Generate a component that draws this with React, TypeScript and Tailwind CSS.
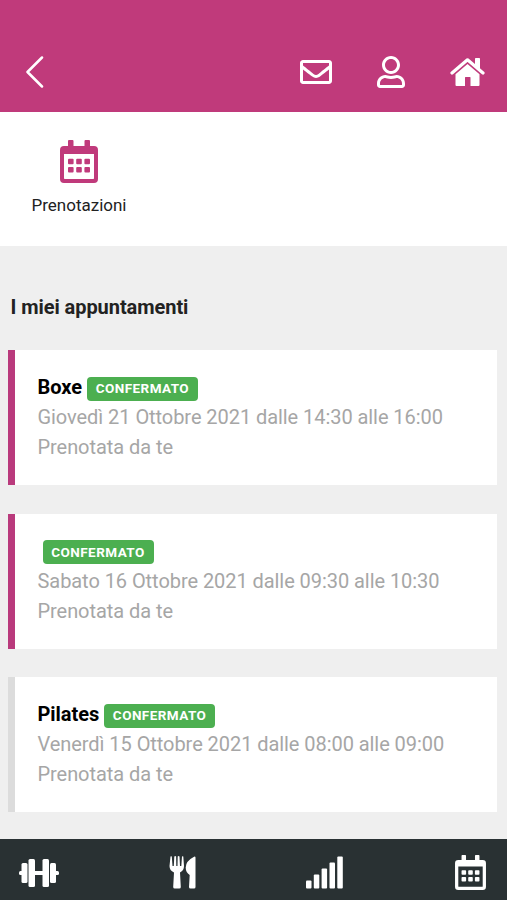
import { FaRegEnvelope, FaRegUser } from 'react-icons/fa';

const appointments = [
  {
    title: 'Boxe',
    when: 'Giovedì 21 Ottobre 2021 dalle 14:30 alle 16:00',
    border: 'border-[#b93a7c]',
  },
  {
    title: '',
    when: 'Sabato 16 Ottobre 2021 dalle 09:30 alle 10:30',
    border: 'border-[#b93a7c]',
  },
  {
    title: 'Pilates',
    when: 'Venerdì 15 Ottobre 2021 dalle 08:00 alle 09:00',
    border: 'border-[#dcdcdc]',
  },
];

function CalendarIcon({ className }: { className: string }) {
  return (
    <svg viewBox="0 0 38 43" fill="currentColor" className={className}>
      <path
        fillRule="evenodd"
        d="M8 1q0-1 1-1h3.500q1 0 1 1v5h11V1q0-1 1-1H29q1 0 1 1v5h4q4 0 4 4v29q0 4-4 4H4q-4 0-4-4V10q0-4 4-4h4zM4 14v24.300q0 .7.700.7h28.600q.7 0 .7-.7V14z"
      />
      <rect x="8" y="18.700" width="5.600" height="5.600" rx="1" />
      <rect x="16.200" y="18.700" width="5.600" height="5.600" rx="1" />
      <rect x="24.400" y="18.700" width="5.600" height="5.600" rx="1" />
      <rect x="8" y="27" width="5.600" height="5.600" rx="1" />
      <rect x="16.200" y="27" width="5.600" height="5.600" rx="1" />
      <rect x="24.400" y="27" width="5.600" height="5.600" rx="1" />
    </svg>
  );
}

function HomeIcon() {
  return (
    <svg viewBox="0 0 36 32" fill="currentColor" className="h-8 w-9">
      <path
        d="M2 17 17.500 3.800 33 17"
        fill="none"
        stroke="currentColor"
        strokeWidth="3.200"
        strokeLinecap="round"
        strokeLinejoin="round"
      />
      <path d="M25 2.800q0-.8.800-.8h3.400q.8 0 .8.800V14l-5-4.300z" />
      <path d="M17.500 8 29.500 18.200V29q0 1-1 1H20.500V21.500q0-.5-.5-.5h-4.500q-.5 0-.5.500V30H6.500q-1 0-1-1V18.200z" />
    </svg>
  );
}

function Header() {
  return (
    <header className="flex h-28 items-end justify-between bg-[#c03a7b] pr-[21px] pb-6 pl-[25px] text-white">
      <svg
        viewBox="0 0 20 32"
        className="h-8 w-5"
        fill="none"
        stroke="currentColor"
        strokeWidth="2.500"
        strokeLinecap="round"
        strokeLinejoin="round"
      >
        <path d="M17 1.500 2.500 16 17 30.500" />
      </svg>
      <div className="flex items-center">
        <FaRegEnvelope className="mr-[43px] size-8" />
        <FaRegUser className="mr-[43px] size-8" />
        <HomeIcon />
      </div>
    </header>
  );
}

function Appointment({ title, when, border }: (typeof appointments)[number]) {
  return (
    <div
      className={`h-[135px] border-l-[7px] bg-white pt-[22px] pl-[22.500px] ${border}`}
    >
      <div className="flex h-[30px] items-center">
        <span className="text-[20px] font-bold tracking-[-0.06px] text-black">
          {title}
        </span>
        <span className="mt-[3px] ml-[5px] flex h-6 w-[111px] items-center justify-center rounded bg-[#4caf50] text-[13.500px] font-bold tracking-[0.450px] text-white">
          CONFERMATO
        </span>
      </div>
      <p className="text-[20px] leading-[30px] tracking-[-0.06px] text-[#a6a6a6]">
        {when}
      </p>
      <p className="text-[20px] leading-[30px] tracking-[-0.06px] text-[#a6a6a6]">
        Prenotata da te
      </p>
    </div>
  );
}

function Footer() {
  return (
    <footer className="flex h-[61px] items-center justify-between bg-[#293133] pt-1.5 pr-[21px] pl-[19px] text-white">
      <svg viewBox="0 0 40 28" fill="currentColor" className="h-7 w-10">
        <rect x="0" y="12" width="5" height="4" rx="1.500" />
        <rect x="2.500" y="4" width="6" height="20" rx="1.500" />
        <rect x="9.500" y="0" width="6.500" height="28" rx="1.500" />
        <rect x="15" y="12" width="10" height="4" />
        <rect x="23.500" y="0" width="6.500" height="28" rx="1.500" />
        <rect x="31" y="4" width="6" height="20" rx="1.500" />
        <rect x="35" y="12" width="5" height="4" rx="1.500" />
      </svg>
      <svg viewBox="0 0 27 33" fill="currentColor" className="h-[33px] w-[27px]">
        <path d="M1.500.5Q2 0 2.800.5L3.500 10h1.300L5.300.5q1-.8 1.800 0L7.300 10h1.200L8.700.5q.8-.8 1.800 0L11 10h1.300L13 .5q.8-.5 1.300 0L15 10q0 4.500-4 6.500L11.800 31q0 1.500-1.500 1.500H5.700q-1.500 0-1.500-1.500L5 16.500Q.5 14.500.5 10z" />
        <path d="M25.500.5q1 0 1 1V31q0 1.500-1.500 1.500h-3.500Q20 32.500 20 31l.7-12q-4-2.500-4-7.500 0-6.500 8.800-11z" />
      </svg>
      <svg viewBox="0 0 37 33" fill="currentColor" className="mr-[2px] h-[33px] w-[37px]">
        <rect x="0" y="24.500" width="5.500" height="8" rx="1" />
        <rect x="7.800" y="18.500" width="5.500" height="14" rx="1" />
        <rect x="15.600" y="12.500" width="5.500" height="20" rx="1" />
        <rect x="23.500" y="6.500" width="5.500" height="26" rx="1" />
        <rect x="31.300" y=".5" width="5.500" height="32" rx="1" />
      </svg>
      <CalendarIcon className="h-[35px] w-[31px]" />
    </footer>
  );
}

export default function App() {
  return (
    <div className="flex h-[900px] w-[507px] flex-col overflow-hidden bg-[#efefef] font-['Roboto',sans-serif]">
      <Header />
      <section className="h-[134px] bg-white pt-7 pl-[31.500px]">
        <div className="flex w-[95px] flex-col items-center">
          <CalendarIcon className="h-[43px] w-[38px] text-[#c03a7b]" />
          <span className="mt-[10px] text-[17px] leading-6 text-[#222]">
            Prenotazioni
          </span>
        </div>
      </section>
      <main className="flex-1 pr-[10px] pl-2">
        <h2 className="mt-[46px] ml-[2.500px] text-[20px] leading-[30px] font-bold tracking-[-0.06px] text-[#222]">
          I miei appuntamenti
        </h2>
        <div className="mt-7 flex flex-col gap-[28.500px]">
          {appointments.map((a) => (
            <Appointment key={a.when} {...a} />
          ))}
        </div>
      </main>
      <Footer />
    </div>
  );
}
